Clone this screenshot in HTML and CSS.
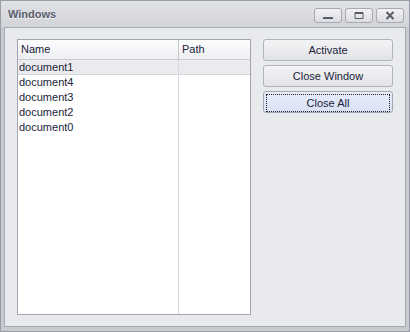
FILE: index.html
```html
<!DOCTYPE html>
<html lang="en">
<head>
    <meta charset="UTF-8">
    <meta name="viewport" content="width=device-width, initial-scale=1.0">
    <title>Windows</title>
    <link rel="stylesheet" href="styles.css">
</head>
<body>
    <div class="window">
        <div class="titlebar">
            <span class="title">Windows</span>
            <div class="caption-buttons">
                <div class="caption-btn">
                    <svg width="10" height="9" viewBox="0 0 10 9"><rect x="0" y="6" width="10" height="2" fill="#585b66"/></svg>
                </div>
                <div class="caption-btn">
                    <svg width="10" height="9" viewBox="0 0 10 9"><path d="M1 1.5h8v6h-8z" fill="none" stroke="#585b66" stroke-width="1"/><rect x="1" y="1" width="8" height="2" fill="#585b66"/></svg>
                </div>
                <div class="caption-btn">
                    <svg width="10" height="9" viewBox="0 0 10 9"><path d="M1.5 1l7 7M8.5 1l-7 7" stroke="#585b66" stroke-width="2"/></svg>
                </div>
            </div>
        </div>
        <div class="client">
            <div class="list">
                <div class="column col-name">
                    <div class="header">Name</div>
                    <div class="row selected">document1</div>
                    <div class="row">document4</div>
                    <div class="row">document3</div>
                    <div class="row">document2</div>
                    <div class="row">document0</div>
                </div>
                <div class="column col-path">
                    <div class="header">Path</div>
                    <div class="row selected"></div>
                </div>
            </div>
            <div class="buttons">
                <button class="btn">Activate</button>
                <button class="btn">Close Window</button>
                <button class="btn focused"><span>Close All</span></button>
            </div>
        </div>
    </div>
</body>
</html>
```

FILE: styles.css
```css
body {
    margin: 0;
    font-family: "Liberation Sans", Arial, sans-serif;
    font-size: 11px;
    color: #20243a;
}
.window {
    width: 410px;
    height: 332px;
    box-sizing: border-box;
    border: 1px solid #999ca6;
    background-color: #c9cad0;
    padding: 0 3px 4px 3px;
    display: flex;
    flex-direction: column;
}
.titlebar {
    height: 26px;
    margin: 0 -3px;
    padding: 0 5px 0 7px;
    display: flex;
    align-items: center;
    justify-content: space-between;
    background: linear-gradient(#e0e1e5, #d3d4d9);
}
.title {
    font-weight: bold;
    color: #5a5e6e;
    text-shadow: 0 1px 0 #f3f3f5;
}
.caption-buttons {
    display: flex;
    gap: 3px;
    margin-top: 2px;
}
.caption-btn {
    width: 28px;
    height: 15px;
    box-sizing: border-box;
    border: 1px solid #a7a9b3;
    border-radius: 3px;
    background: linear-gradient(#f2f2f4, #dcdde2);
    display: flex;
    align-items: center;
    justify-content: center;
}
.client {
    flex: 1;
    border: 1px solid #a6a8b2;
    background-color: #e9eaee;
    padding: 11px 12px;
    display: flex;
    gap: 12px;
}
.list {
    width: 234px;
    box-sizing: border-box;
    border: 1px solid #a2a5b0;
    background-color: white;
    display: flex;
}
.column {
    display: flex;
    flex-direction: column;
}
.col-name {
    width: 160px;
    border-right: 1px solid #d8d9de;
}
.col-path {
    flex: 1;
}
.header {
    height: 19px;
    line-height: 19px;
    padding-left: 3px;
    border-bottom: 1px solid #cbccd2;
    background: linear-gradient(#fcfcfd, #eeeff2);
}
.col-name .header {
    border-right: 1px solid #c8c9cf;
    margin-right: -1px;
}
.row {
    height: 15px;
    line-height: 15px;
    padding-left: 1px;
}
.row.selected {
    height: 14px;
    background-color: #ebebef;
    border-bottom: 1px solid #d5d6dc;
}
.buttons {
    width: 130px;
    display: flex;
    flex-direction: column;
    gap: 4px;
}
.btn {
    height: 22px;
    padding: 0;
    font-family: "Liberation Sans", Arial, sans-serif;
    font-size: 11px;
    color: #20243a;
    border: 1px solid #b1b3bc;
    border-radius: 3px;
    background: linear-gradient(#f4f4f6, #e2e3e7);
}
.btn.focused {
    background: linear-gradient(#e7ecf9, #d9e1f5);
    border-color: #a3a8b9;
    padding: 2px;
}
.btn.focused span {
    display: block;
    height: 16px;
    line-height: 16px;
    border: 1px dotted #222;
}
```
